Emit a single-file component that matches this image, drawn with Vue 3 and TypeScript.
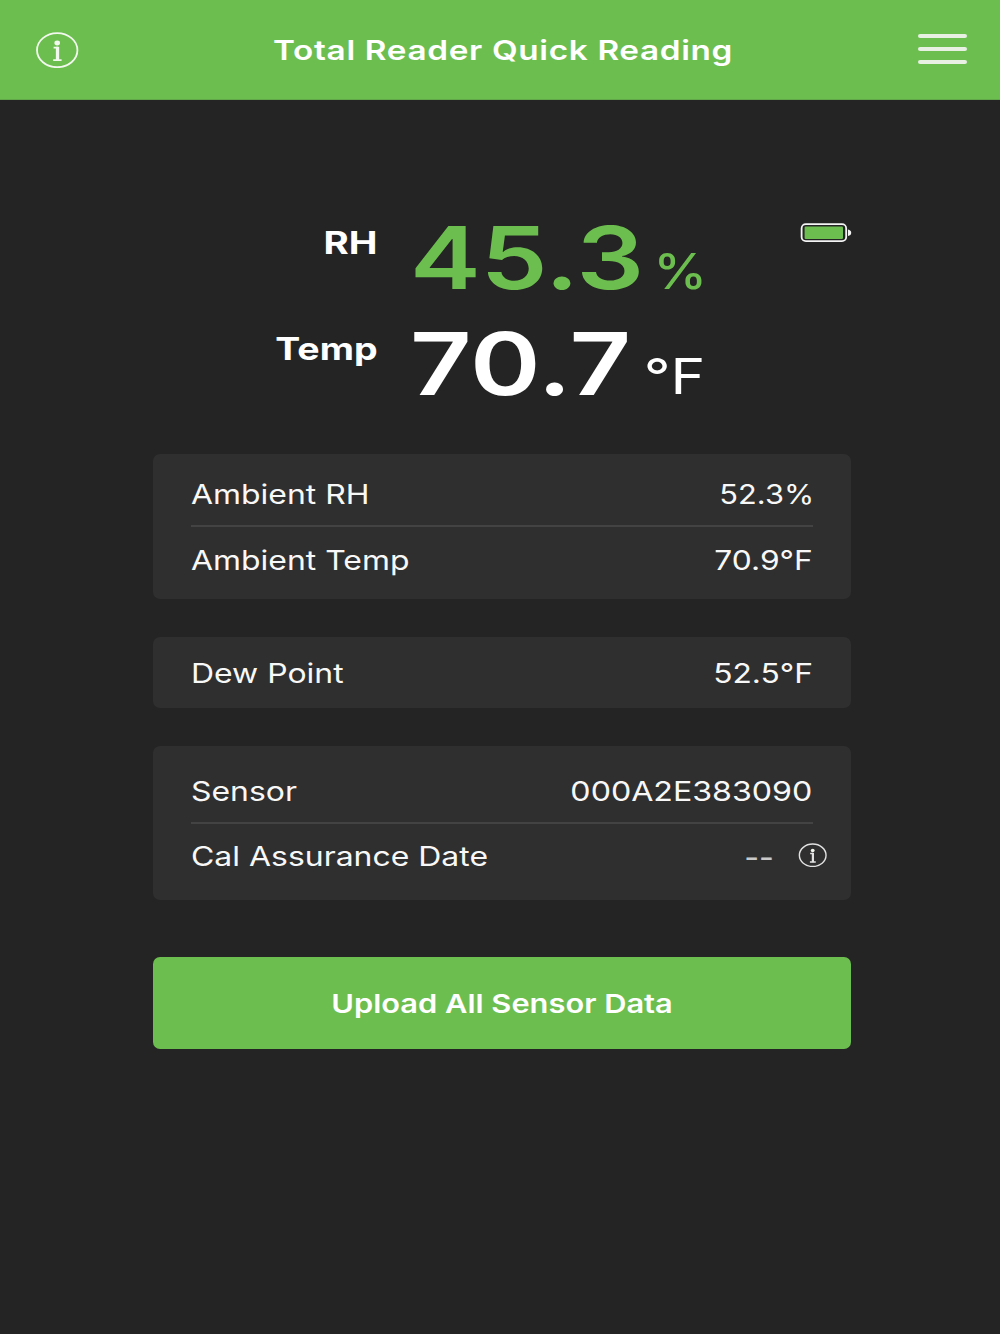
<script setup lang="ts">
interface Row {
  label: string
  value: string
  kind?: 'percent' | 'serial' | 'empty'
}

const cards: { name: string; rows: Row[] }[] = [
  {
    name: 'ambient',
    rows: [
      { label: 'Ambient RH', value: '52.3%', kind: 'percent' },
      { label: 'Ambient Temp', value: '70.9°F' },
    ],
  },
  { name: 'dew', rows: [{ label: 'Dew Point', value: '52.5°F' }] },
  {
    name: 'sensor',
    rows: [
      { label: 'Sensor', value: '000A2E383090', kind: 'serial' },
      { label: 'Cal Assurance Date', value: '--', kind: 'empty' },
    ],
  },
]
</script>

<template>
  <div class="screen">
    <header class="bar">
      <svg class="info" width="43" height="36" viewBox="0 0 43 36">
        <ellipse cx="21.2" cy="18.2" rx="20.2" ry="17" />
        <ellipse class="dot" cx="21.2" cy="11" rx="2.8" ry="2.4" />
        <path class="serif" d="M17.6 15.6H22M17.2 28.2H25.6" />
        <path class="stem" d="M21.5 14.8V28.6" />
      </svg>
      <h1 class="title"><span class="wide">Total Reader Quick Reading</span></h1>
      <button class="menu" aria-label="Menu"><i></i><i></i><i></i></button>
    </header>

    <main class="content">
      <section class="readings">
        <div class="reading rh">
          <div class="name"><span class="wide">RH</span></div>
          <div class="num"><span class="wide">45.3</span></div>
          <div class="unit"><span class="wide">%</span></div>
        </div>
        <div class="reading temp">
          <div class="name"><span class="wide">Temp</span></div>
          <div class="num"><span class="wide">70.7</span></div>
          <div class="unit"><span class="wide">°F</span></div>
        </div>
        <svg class="battery" width="52" height="20" viewBox="0 0 52 20">
          <rect x="1.6" y="1.2" width="44.6" height="17" rx="4.2" fill="none" stroke="#f4f4f4" stroke-width="1.8" />
          <rect x="4.6" y="3.5" width="38.4" height="12.4" rx="1.2" fill="#6cbe4f" />
          <path d="M48 6.4Q51.2 7 51.2 9.7T48 13Z" fill="#f4f4f4" />
        </svg>
      </section>

      <section v-for="card in cards" :key="card.name" class="card" :class="card.name">
        <div v-for="row in card.rows" :key="row.label" class="row">
          <span class="wide label">{{ row.label }}</span>
          <span class="wide value" :class="row.kind">{{ row.value }}</span>
          <svg v-if="row.kind === 'empty'" class="info small" width="29" height="24" viewBox="0 0 43 36">
            <ellipse cx="21.8" cy="18.4" rx="20" ry="16.8" />
            <ellipse class="dot" cx="21.8" cy="11.2" rx="2.9" ry="2.5" />
            <path class="serif" d="M18 15.8H22.6M17.6 28.4H26.4" />
            <path class="stem" d="M22.1 14.8V28.8" />
          </svg>
        </div>
      </section>

      <button class="upload"><span class="wide">Upload All Sensor Data</span></button>
    </main>
  </div>
</template>

<style>
body {
  background: #242424;
}
</style>

<style scoped>
.screen {
  height: 1334px;
  overflow: hidden;
  background: #242424;
  color: #fff;
  font-family: Inter, "Liberation Sans", sans-serif;
}
.screen * {
  box-sizing: border-box;
}
/* Glyphs are drawn wider than their natural proportions. */
.wide {
  display: inline-block;
  white-space: nowrap;
  transform: scaleX(var(--sx, 1.2));
  transform-origin: var(--from, left) center;
}
.bar {
  display: flex;
  align-items: center;
  height: 99.5px;
  padding: 0 33px 0 36px;
  background: #6cbe4f;
  box-shadow: inset 0 -1px #62a84a;
}
.info {
  display: block;
  fill: none;
  stroke: #f3f8ef;
  stroke-width: 1.8;
}
.info .dot {
  fill: #f3f8ef;
  stroke: none;
}
.info .stem {
  stroke-width: 3.3;
}
.title {
  flex: 1;
  margin: 0 0 0 9px;
  text-align: center;
  font-size: 27.5px;
  font-weight: 600;
  line-height: 36px;
  letter-spacing: 0.55px;
  --from: center;
  --sx: 1.21;
}
.menu {
  display: flex;
  flex-direction: column;
  gap: 9px;
  margin: 0;
  padding: 0 0 2px;
  border: 0;
  background: none;
}
.menu i {
  width: 49px;
  height: 4px;
  border-radius: 2px;
  background: #e8efe3;
}
.content {
  width: 698.6px;
  margin-left: 152.7px;
}
.readings {
  position: relative;
  padding-top: 104px;
  height: 354.5px;
}
.reading {
  display: flex;
  height: 106px;
}
.name {
  width: 225px;
  padding-top: 21px;
  text-align: right;
  font-size: 31px;
  font-weight: 700;
  line-height: 36px;
  --from: right;
  --sx: 1.21;
}
.rh .name {
  --sx: 1.24;
}
.num {
  width: 243px;
  padding: 2px 0 0 32px;
  font-size: 87px;
  font-weight: 600;
  line-height: 104px;
  --sx: 1.222;
}
.temp .num {
  --sx: 1.23;
}
.unit {
  width: 84.3px;
  padding-top: 37px;
  text-align: right;
  font-size: 49px;
  font-weight: 400;
  line-height: 59px;
  --from: right;
}
.rh .unit {
  width: 86.3px;
  font-size: 49.5px;
  font-weight: 500;
  line-height: 60px;
  --sx: 1.09;
}
.rh .num,
.rh .unit {
  color: #6cbe4f;
}
.battery {
  position: absolute;
  right: -0.7px;
  top: 123px;
}
.card {
  margin-bottom: 38px;
  padding: 0 38px;
  border-radius: 7px;
  background: #2f2f2f;
}
.row {
  position: relative;
  display: flex;
  align-items: center;
  justify-content: space-between;
  height: 65px;
  font-size: 27px;
  font-weight: 400;
  color: #f8f8f8;
  --sx: 1.183;
}
.row:first-child {
  padding-top: 3px;
}
.row + .row {
  padding-top: 2px;
  border-top: 2px solid #434343;
}
.value {
  --from: right;
  --sx: 1.175;
}
.percent {
  margin-right: -1px;
  --sx: 1.14;
}
.serial {
  margin-right: 1px;
  --sx: 1.19;
}
.ambient {
  height: 145px;
  padding-top: 6px;
}
.ambient .row + .row {
  padding-top: 3px;
}
.dew {
  height: 71px;
  padding-top: 2.5px;
}
.sensor {
  height: 154px;
  padding-top: 11px;
}
.empty {
  margin: 1px 39px 0 0;
  font-weight: 500;
  color: #c9c9c9;
  --sx: 1.19;
}
.small {
  position: absolute;
  right: -14px;
  top: 19px;
  stroke: #e2e2e2;
  stroke-width: 2.1;
}
.upload {
  display: block;
  width: 100%;
  height: 92px;
  margin-top: 57px;
  padding: 1px 0 0;
  border: 0;
  border-radius: 7px;
  background: #6cbe4f;
  color: #fff;
  font: 600 26px/36px Inter, "Liberation Sans", sans-serif;
  --from: center;
  --sx: 1.185;
}
</style>
